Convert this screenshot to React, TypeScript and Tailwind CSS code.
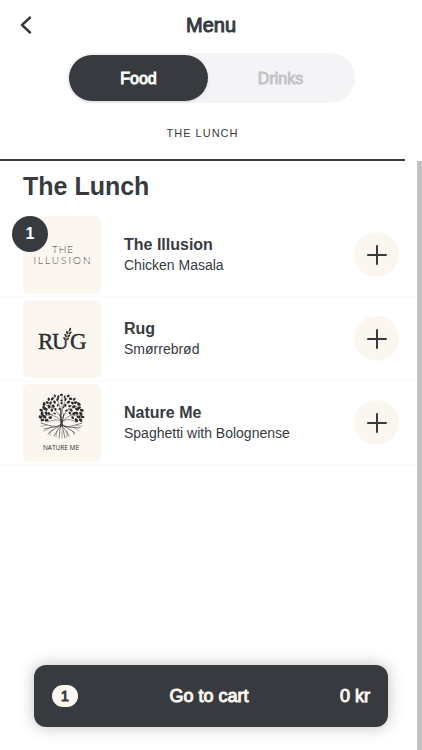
import React from "react";

const sans = "font-['Liberation_Sans',Arial,sans-serif]";
const heavy = "[-webkit-text-stroke:1px_currentColor]";

function IllusionLogo() {
  return (
    <svg viewBox="0 0 78 78" className="size-full" role="img" aria-label="The Illusion logo">
      <g fill="#3c3a39" fontFamily="Lato, sans-serif" fontWeight="300" fontSize="10" textAnchor="middle">
        <text x="40" y="37" letterSpacing="1">THE</text>
        <text x="40" y="48" letterSpacing="2">ILLUSION</text>
      </g>
      <g stroke="#fbf6f0" strokeWidth="0.8">
        <path d="M29 34l6-2M37 31l5 3M45 32l4 4" />
        <path d="M16 45l5-2M24 44l5-2M32 43l6 4M41 42l5 4M54 43l6 2M63 46l6-3" />
      </g>
    </svg>
  );
}

function RugLogo() {
  return (
    <svg viewBox="0 0 78 78" className="size-full" role="img" aria-label="Rug logo">
      <g fill="#2c2e30" stroke="#2c2e30" strokeWidth="0.4" fontFamily="'Liberation Serif', serif" fontSize="23">
        <text x="15" y="49">R</text>
        <text x="29" y="49">U</text>
        <text x="47" y="49">G</text>
      </g>
      <path d="M39.500 30h6.600v10h-6.600z" fill="#fbf6f0" />
      <path d="M42.500 44c0-5 1-9 4-14" fill="none" stroke="#2c2e30" strokeWidth="0.6" />
      <g fill="#2c2e30">
        <ellipse cx="47" cy="29.500" rx="0.9" ry="1.9" transform="rotate(25 47 29.500)" />
        <ellipse cx="44" cy="32.500" rx="0.9" ry="1.8" transform="rotate(-12 44 32.500)" />
        <ellipse cx="47.200" cy="33" rx="0.9" ry="1.8" transform="rotate(50 47.200 33)" />
        <ellipse cx="42.500" cy="35.500" rx="0.9" ry="1.800" transform="rotate(-20 42.500 35.500)" />
        <ellipse cx="45.800" cy="36" rx="0.9" ry="1.800" transform="rotate(50 45.800 36)" />
        <ellipse cx="41.400" cy="38.500" rx="0.9" ry="1.700" transform="rotate(-25 41.400 38.500)" />
        <ellipse cx="44.600" cy="39" rx="0.9" ry="1.700" transform="rotate(50 44.600 39)" />
      </g>
    </svg>
  );
}

const leafRings = [
  { r: 20.2, n: 23, from: 168, to: 372, size: 1.7 },
  { r: 16.2, n: 17, from: 164, to: 376, size: 1.7 },
  { r: 12, n: 11, from: 172, to: 368, size: 1.5 },
  { r: 8, n: 6, from: 200, to: 340, size: 1.2 },
];

const leaves = leafRings.flatMap(({ r, n, from, to, size }, ring) =>
  Array.from({ length: n }, (_, i) => {
    const deg = from + ((to - from) * i) / (n - 1);
    const a = (deg * Math.PI) / 180;
    const rr = r + (i % 2 ? 0.9 : -0.7);
    return {
      x: 38.5 + rr * Math.cos(a),
      y: 32 + rr * Math.sin(a),
      deg: deg + (i % 3) * 35,
      size: size * (0.75 + Math.abs(Math.cos(a)) * 0.35) + ((i + ring) % 3) * 0.15,
    };
  })
);

function NatureLogo() {
  return (
    <svg viewBox="0 0 78 78" className="size-full" role="img" aria-label="Nature Me logo">
      <g fill="#2c2e30">
        {leaves.map((l, i) => (
          <ellipse key={i} cx={l.x} cy={l.y} rx={l.size} ry={l.size * 0.7} transform={`rotate(${l.deg} ${l.x} ${l.y})`} />
        ))}
      </g>
      <g transform="translate(0 -1)" fill="none" stroke="#2c2e30" strokeWidth="0.6" strokeLinecap="round">
        <path d="M38 43c1-4 0-8-1-12M39 43c0-4 1-8 2-12M38 42c0-6 0-10 0-16" strokeWidth="1" />
        <path d="M38 38c-4-6-10-5-17-9M38 35c-3-6-8-9-11-14M38 30c-1-6-2-9-4-14M39 31c0-6 2-10 4-15M40 34c3-7 8-10 10-13M40 38c5-6 10-6 16-8M30 31c-4 1-7 2-11 2M47 31c4 2 7 2 11 2M37 38c-4-2-8-1-12 1M41 38c4-3 8-1 12 1M33 26c-3-2-7-2-10-4M45 27c3-2 7-3 10-4M39 25V14" strokeWidth="0.5" />
        <path d="M38 41c-3 4-8 3-20-1M38 42c-5 3-11 2-17 4M38 42c-5 4-9 4-13 9M38 43c-4 3-4 7-7 10M38 43c-2 4-1 7-2 12M39 43c1 4 2 7 3 12M39 43c3 4 5 6 7 10M39 42c5 3 8 4 13 8M39 42c5 3 11 2 18 3M39 41c3 4 8 3 20-1" />
        <path d="M28 44c-3 2-5 4-7 4M30 47c-2 0-3 3-3 5M34 48c-2 2 0 4-1 6M44 48c0 3 0 4 0 6M48 47c2 2 3 2 3 5M39 48c0 3 0 4 0 7M50 44c3 2 4 2 6 4M24 42c-2 0-3 2-6 1M53 42c2 0 3 2 6 1" strokeWidth="0.4" />
      </g>
      <text x="38" y="66" textAnchor="middle" fontFamily="'Open Sans', sans-serif" fontSize="6.500" fontWeight="400" fill="#2c2e30">
        NATURE ME
      </text>
    </svg>
  );
}

const dishes = [
  { name: "The Illusion", detail: "Chicken Masala", Logo: IllusionLogo, count: 1 },
  { name: "Rug", detail: "Smørrebrød", Logo: RugLogo, count: 0 },
  { name: "Nature Me", detail: "Spaghetti with Bolognense", Logo: NatureLogo, count: 0 },
];

export default function App() {
  return (
    <div className={`relative flex min-h-screen flex-col bg-white text-[#373b3f] ${sans}`}>
      <header className="grid h-[49px] grid-cols-[52px_1fr_52px] items-center">
        <button type="button" aria-label="Back" className="flex h-full items-center justify-center">
          <svg width="12" height="18" viewBox="0 0 12 18" fill="none" stroke="currentColor" strokeWidth="2.4" strokeLinecap="round" strokeLinejoin="round">
            <path d="M10 1.500L2 9l8 7.500" />
          </svg>
        </button>
        <h1 className={`text-center text-[20px] leading-6 ${heavy}`}>Menu</h1>
      </header>

      <div className="mx-[67px] mt-1 grid h-[50px] grid-cols-[141fr_147fr] rounded-full bg-[#f4f4f7] p-[2px] text-[16px]">
        <button type="button" aria-pressed="true" className="rounded-full bg-[#373b3f] pt-[2px] text-white shadow-sm">
          <span className={heavy}>Food</span>
        </button>
        <button type="button" aria-pressed="false" className="rounded-full pt-[2px] text-[#c4c4c8]">
          <span className={heavy}>Drinks</span>
        </button>
      </div>

      <nav className="mr-[17px] flex h-[58px] border-b-2 border-[#373b3f]">
        <a href="#the-lunch" className="flex flex-1 items-center justify-center pt-1 text-[11px] tracking-[1px]">
          THE LUNCH
        </a>
      </nav>

      <div className="flex flex-1">
        <main id="the-lunch" className="flex-1">
          <h2 className="h-[52px] pl-[23px] text-[25px] leading-[51px] font-bold">The Lunch</h2>
          <ul>
            {dishes.map(({ name, detail, Logo, count }) => (
              <li key={name} className="flex h-[84px] items-center border-b border-[#fafafa] pr-[18px] pl-[23px]">
                <div className="relative size-[78px] shrink-0 rounded-md bg-[#fbf6f0]">
                  <Logo />
                  {count > 0 && (
                    <span className="absolute top-0 -left-[11px] flex size-[36px] items-center justify-center rounded-full bg-[#373b3f] text-[16px] font-bold text-white">
                      {count}
                    </span>
                  )}
                </div>
                <div className="ml-[23px] flex-1">
                  <h3 className="text-[16px] leading-[21px] font-bold">{name}</h3>
                  <p className="text-[14px] leading-[21px]">{detail}</p>
                </div>
                <button type="button" aria-label={`Add ${name}`} className="flex size-[45px] items-center justify-center rounded-full bg-[#fbf6f0]">
                  <svg width="20" height="20" viewBox="0 0 20 20" fill="none" stroke="currentColor" strokeWidth="2" strokeLinecap="round">
                    <path d="M10 1v18M1 10h18" />
                  </svg>
                </button>
              </li>
            ))}
          </ul>
        </main>
        <div className="w-[5px] bg-[#c1c1c1]" />
      </div>

      <button
        type="button"
        className="absolute inset-x-[34px] bottom-[23px] flex h-[62px] items-center justify-between rounded-xl bg-[#373b3f] px-[18px] text-[18px] text-[#fbf6f0] shadow-[0_0_16px_rgba(0,0,0,0.25)]"
      >
        <span className={`flex h-[22px] w-[26px] items-center justify-center rounded-full bg-[#fbf6f0] text-[14px] text-[#373b3f] ${heavy}`}>1</span>
        <span className={heavy}>Go to cart</span>
        <span className={heavy}>0 kr</span>
      </button>
    </div>
  );
}
